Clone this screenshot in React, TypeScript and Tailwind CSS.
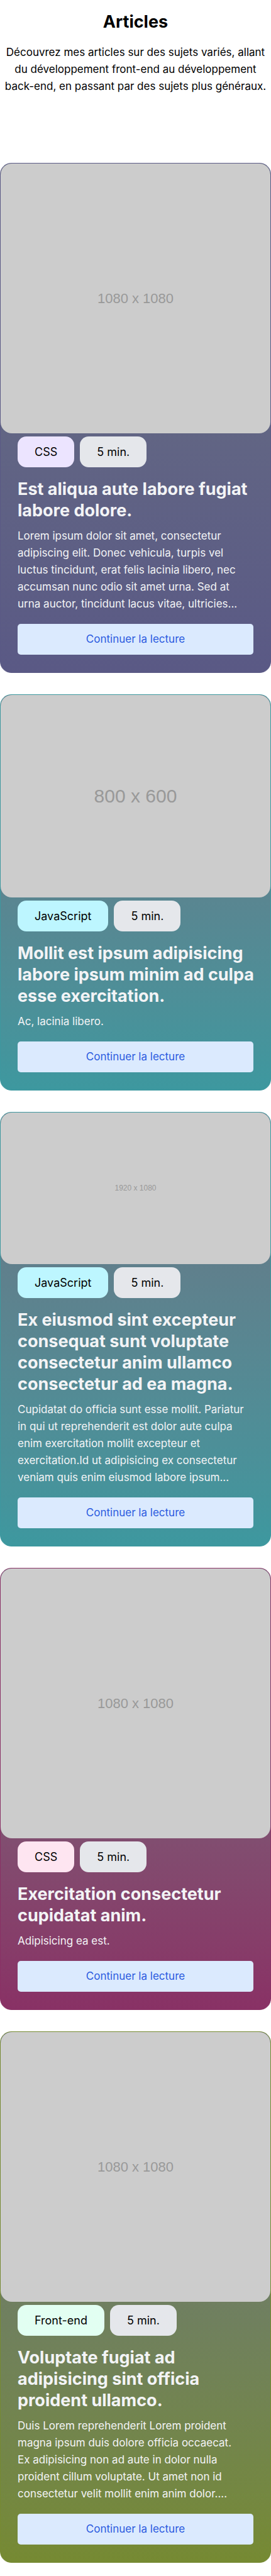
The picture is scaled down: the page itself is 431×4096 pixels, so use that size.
type Article = {
  tag: string;
  tagClass: string;
  cardClass: string;
  title: string;
  text: string;
  image: string;
  imageClass: string;
};

const articles: Article[] = [
  {
    tag: 'CSS',
    tagClass: 'bg-[#ece4ff]',
    cardClass: 'border-[#5a5985] to-[#5a5985]',
    title: 'Est aliqua aute labore fugiat labore dolore.',
    text: 'Lorem ipsum dolor sit amet, consectetur adipiscing elit. Donec vehicula, turpis vel luctus tincidunt, erat felis lacinia libero, nec accumsan nunc odio sit amet urna. Sed at urna auctor, tincidunt lacus vitae, ultricies...',
    image: '1080 x 1080',
    imageClass: 'aspect-square text-[22px]',
  },
  {
    tag: 'JavaScript',
    tagClass: 'bg-[#bdf6ff]',
    cardClass: 'border-[#3d989f] to-[#3d989f]',
    title: 'Mollit est ipsum adipisicing labore ipsum minim ad culpa esse exercitation.',
    text: 'Ac, lacinia libero.',
    image: '800 x 600',
    imageClass: 'aspect-[4/3] text-[30px]',
  },
  {
    tag: 'JavaScript',
    tagClass: 'bg-[#bdf6ff]',
    cardClass: 'border-[#3d989f] to-[#3d989f]',
    title: 'Ex eiusmod sint excepteur consequat sunt voluptate consectetur anim ullamco consectetur ad ea magna.',
    text: 'Cupidatat do officia sunt esse mollit. Pariatur in qui ut reprehenderit est dolor aute culpa enim exercitation mollit excepteur et exercitation.Id ut adipisicing ex consectetur veniam quis enim eiusmod labore ipsum...',
    image: '1920 x 1080',
    imageClass: 'aspect-video text-[12px]',
  },
  {
    tag: 'CSS',
    tagClass: 'bg-[#fee5f1]',
    cardClass: 'border-[#893165] to-[#893165]',
    title: 'Exercitation consectetur cupidatat anim.',
    text: 'Adipisicing ea est.',
    image: '1080 x 1080',
    imageClass: 'aspect-square text-[22px]',
  },
  {
    tag: 'Front-end',
    tagClass: 'bg-[#e2fff2]',
    cardClass: 'border-[#768a32] to-[#768a32]',
    title: 'Voluptate fugiat ad adipisicing sint officia proident ullamco.',
    text: 'Duis Lorem reprehenderit Lorem proident magna ipsum duis dolore officia occaecat. Ex\u00a0adipisicing non ad aute in dolor nulla proident cillum voluptate. Ut amet non id consectetur velit mollit enim anim dolor....',
    image: '1080 x 1080',
    imageClass: 'aspect-square text-[22px]',
  },
];

function ArticleCard({ article }: { article: Article }) {
  return (
    <article
      className={`overflow-hidden rounded-[18px] border bg-linear-to-b from-[#6a7282] ${article.cardClass}`}
    >
      <div
        className={`flex w-full items-center justify-center rounded-[18px] bg-[#cccccc] font-['Liberation_Sans',sans-serif] text-[#999999] ${article.imageClass}`}
      >
        {article.image}
      </div>
      <div className="px-[27px] pt-[5px] pb-7">
        <div className="flex gap-[9px] text-[18px]">
          <span className={`rounded-[14px] px-[27px] py-[11px] text-black ${article.tagClass}`}>{article.tag}</span>
          <span className="rounded-[14px] bg-[#e5e7eb] px-[27px] py-[11px] text-black">5 min.</span>
        </div>
        <h2 className="mt-[18px] -mr-2 text-[27px] leading-[34px] font-bold text-gray-100">{article.title}</h2>
        <p className="mt-[10px] text-gray-100">{article.text}</p>
        <a href="#" className="mt-[18px] block rounded-[5px] bg-[#dbeafe] py-[11px] text-center text-[#2b5be0]">
          Continuer la lecture
        </a>
      </div>
    </article>
  );
}

export default function App() {
  return (
    <main className="bg-white pb-[21px] font-['Inter',sans-serif] text-[17px] leading-[27px] text-black">
      <header className="px-1 pt-[18px] pb-[108px] text-center">
        <h1 className="text-[27px] leading-[34px] font-bold">Articles</h1>
        <p className="mt-[18px]">
          Découvrez mes articles sur des sujets variés, allant du développement front-end au développement back-end, en
          passant par des sujets plus généraux.
        </p>
      </header>
      <div className="flex flex-col gap-[34px]">
        {articles.map((article) => (
          <ArticleCard key={article.title} article={article} />
        ))}
      </div>
    </main>
  );
}
